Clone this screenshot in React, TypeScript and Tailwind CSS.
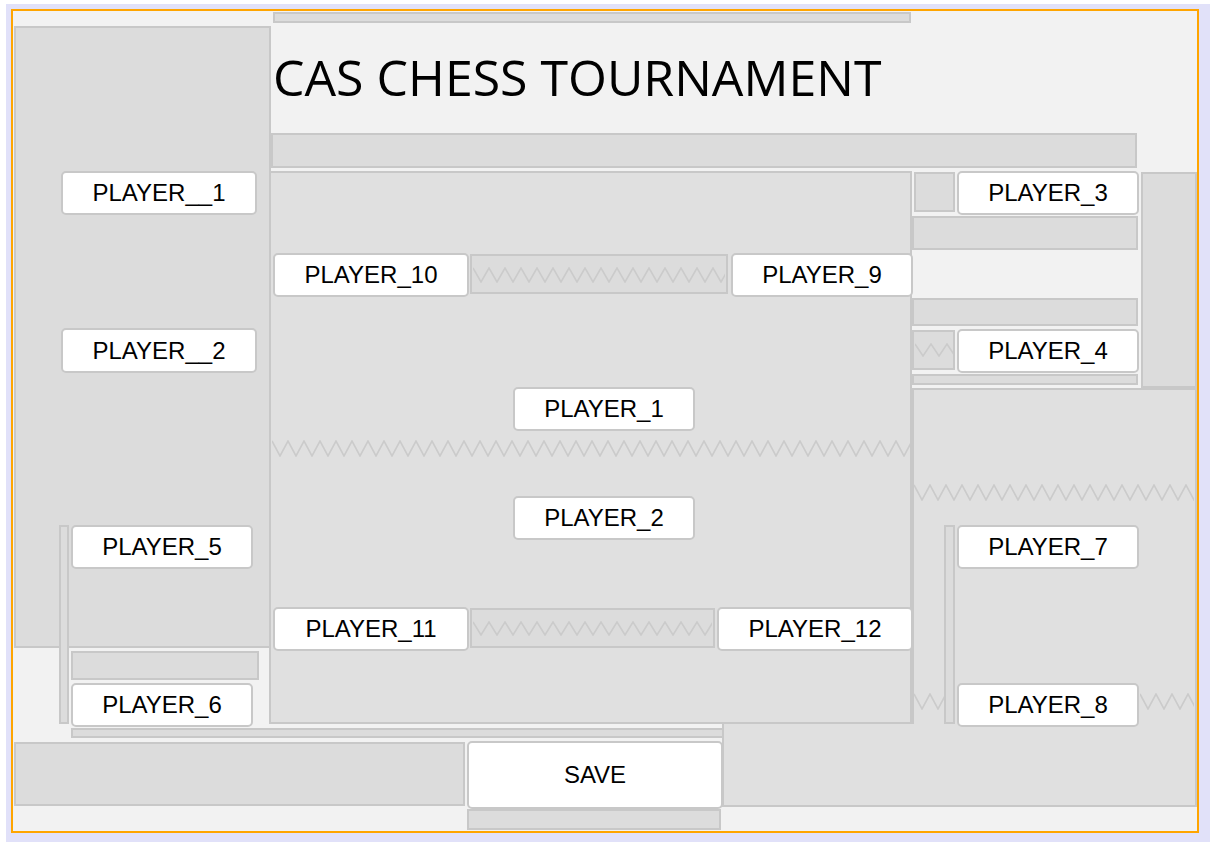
import React from 'react';

// light grey wireframe block
const Block = ({ className = '', children }: { className?: string; children?: React.ReactNode }) => (
  <div className={`shrink-0 border-2 border-[#c8c8c8] bg-[#dcdcdc] ${className}`}>{children}</div>
);

const Player = ({ name, className = '' }: { name: string; className?: string }) => (
  <div
    className={`flex shrink-0 items-center justify-center rounded-[5px] border-2 border-[#c8c8c8] bg-white text-[24px] text-black font-['Liberation_Sans',Arial,sans-serif] ${className}`}
  >
    {name}
  </div>
);

// bracket connector drawn as a zig-zag line
const Zigzag = ({ width, height, className = '' }: { width: number; height: number; className?: string }) => {
  const pts: string[] = [];
  for (let x = 0, i = 0; x <= width + 16; x += 8, i++) {
    pts.push(`${x},${i % 2 === 0 ? 1 : height - 1}`);
  }
  return (
    <svg width={width} height={height} className={`block shrink-0 ${className}`}>
      <polyline points={pts.join(' ')} fill="none" stroke="#cbcbcb" strokeWidth={1.6} />
    </svg>
  );
};

export default function App() {
  return (
    <div className="h-[842px] w-[1210px] bg-white pl-[6px] pt-[4px]">
      <div className="h-full bg-[#e1e1f9] pb-[9px] pl-[5px] pr-[11px] pt-[5px]">
        <div className="flex h-full flex-col overflow-hidden border-2 border-[#ffa500] bg-[#f2f2f2]">
          {/* main area */}
          <div className="flex h-[713px] shrink-0">
            {/* left column */}
            <div className="w-[256px] shrink-0 pl-[1px] pt-[15px]">
              <Block className="flex h-[622px] w-[257px] flex-col pl-[43px]">
                <Player name="PLAYER__1" className="ml-[2px] mt-[143px] h-[44px] w-[196px]" />
                <Player name="PLAYER__2" className="ml-[2px] mt-[113px] h-[45px] w-[196px]" />
                <div className="mt-[152px] flex shrink-0 items-start">
                  <Block className="h-[199px] w-[10px]" />
                  <div className="ml-[2px] flex flex-col">
                    <Player name="PLAYER_5" className="h-[44px] w-[182px]" />
                    <Block className="mt-[82px] h-[29px] w-[188px]" />
                    <Player name="PLAYER_6" className="mt-[3px] h-[44px] w-[182px]" />
                  </div>
                </div>
              </Block>
            </div>

            {/* header + bracket */}
            <div className="flex w-[928px] shrink-0 flex-col">
              <Block className="ml-[4px] mt-[1px] h-[11px] w-[638px]" />
              <h1 className="ml-[4px] mt-[29px] h-[50px] whitespace-nowrap font-['Open_Sans',sans-serif] text-[50px] font-normal leading-[50px] text-black">
                CAS CHESS TOURNAMENT
              </h1>
              <Block className="ml-[2px] mt-[31px] h-[35px] w-[866px]" />

              <div className="mt-[3px] flex items-start">
                {/* center panel */}
                <Block className="flex h-[553px] w-[643px] flex-col bg-[#e0e0e0]">
                  <div className="mt-[80px] flex items-start pl-[2px]">
                    <Player name="PLAYER_10" className="h-[44px] w-[196px]" />
                    <Block className="ml-[1px] mt-[1px] h-[40px] w-[258px] pl-[1px] pt-[11px]">
                      <Zigzag width={252} height={16} />
                    </Block>
                    <Player name="PLAYER_9" className="ml-[3px] h-[44px] w-[182px]" />
                  </div>
                  <Player name="PLAYER_1" className="ml-[242px] mt-[90px] h-[44px] w-[182px]" />
                  <Zigzag width={638} height={17} className="ml-[1px] mt-[9px]" />
                  <Player name="PLAYER_2" className="ml-[242px] mt-[39px] h-[44px] w-[182px]" />
                  <div className="mt-[67px] flex items-start pl-[2px]">
                    <Player name="PLAYER_11" className="h-[44px] w-[196px]" />
                    <Block className="ml-[1px] mt-[1px] h-[40px] w-[245px] pl-[1px] pt-[11px]">
                      <Zigzag width={239} height={15} />
                    </Block>
                    <Player name="PLAYER_12" className="ml-[2px] h-[44px] w-[196px]" />
                  </div>
                </Block>

                {/* right column */}
                <div className="flex w-[285px] shrink-0 flex-col">
                  <div className="flex items-start">
                    <div className="flex w-[229px] shrink-0 flex-col">
                      <div className="flex items-start">
                        <Block className="ml-[2px] mt-[1px] h-[40px] w-[41px]" />
                        <Player name="PLAYER_3" className="ml-[2px] h-[44px] w-[182px]" />
                      </div>
                      <Block className="mt-[1px] h-[34px] w-[226px]" />
                      <Block className="mt-[48px] h-[28px] w-[226px]" />
                      <div className="mt-[3px] flex items-start">
                        <Block className="mt-[1px] h-[40px] w-[43px] pl-[1px] pt-[11px]">
                          <Zigzag width={38} height={14} />
                        </Block>
                        <Player name="PLAYER_4" className="ml-[2px] h-[44px] w-[182px]" />
                      </div>
                      <Block className="mt-[1px] h-[11px] w-[226px]" />
                    </div>
                    <Block className="mt-[1px] h-[216px] w-[56px]" />
                  </div>

                  <Block className="flex h-[419px] w-[285px] flex-col bg-[#e0e0e0]">
                    <Zigzag width={280} height={17} className="mt-[94px]" />
                    <div className="mt-[24px] flex items-start">
                      <Zigzag width={30} height={17} className="mt-[168px]" />
                      <Block className="h-[199px] w-[11px]" />
                      <div className="ml-[2px] flex flex-col">
                        <Player name="PLAYER_7" className="h-[44px] w-[182px]" />
                        <Player name="PLAYER_8" className="mt-[114px] h-[44px] w-[182px]" />
                      </div>
                      <Zigzag width={54} height={17} className="ml-[1px] mt-[168px]" />
                    </div>
                  </Block>
                </div>
              </div>
            </div>
          </div>

          {/* footer */}
          <div className="flex shrink-0 items-start">
            <div className="flex w-[709px] shrink-0 flex-col">
              <Block className="ml-[58px] mt-[4px] h-[10px] w-[653px]" />
              <div className="mt-[3px] flex items-start">
                <Block className="ml-[1px] mt-[1px] h-[64px] w-[451px]" />
                <div className="ml-[2px] flex flex-col">
                  <Player name="SAVE" className="h-[68px] w-[256px]" />
                  <Block className="h-[21px] w-[254px]" />
                </div>
              </div>
            </div>
            <div className="h-[83px] w-[192px] shrink-0 border-b-2 border-l-2 border-[#c8c8c8] bg-[#e0e0e0]" />
          </div>
        </div>
      </div>
    </div>
  );
}
